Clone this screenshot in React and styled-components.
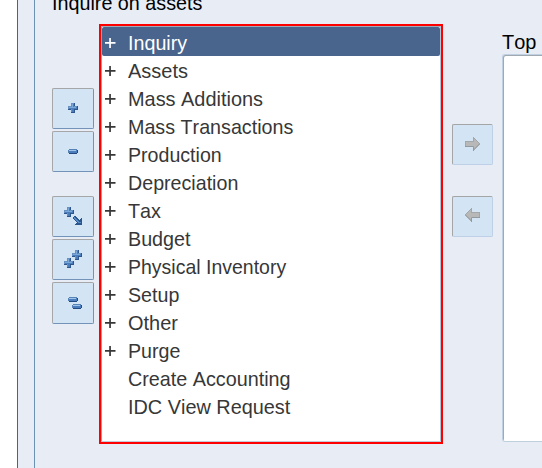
import React from "react";
import styled, { createGlobalStyle } from "styled-components";

const GlobalStyle = createGlobalStyle`
  * { box-sizing: border-box; }
  body { margin: 0; background: #fff; overflow: hidden; }
`;

const Page = styled.div`
  width: 542px;
  height: 468px;
  padding-left: 17px;
  overflow: hidden;
  background: #fff;
  color: #000;
  font: 21px/28px "Liberation Sans", Arial, sans-serif;
  font-kerning: none;
`;

const Window = styled.main`
  height: 468px;
  padding-left: 16px;
  background: #e8edf5;
  border-left: 1px solid #47648e;
`;

const TabPanel = styled.section`
  height: 480px;
  margin-bottom: -12px;
  border-left: 1px solid #6b93b5;
`;

const Description = styled.header`
  display: flex;
  align-items: flex-end;
  height: 24px;
  padding: 0 0 7px 17px;
`;

const Label = styled.span`
  display: block;
  white-space: nowrap;
  transform: scaleX(${({ $stretch }) => $stretch});
  transform-origin: left center;
`;

const Columns = styled.div`
  display: flex;
  align-items: flex-start;
`;

const Toolbar = styled.div`
  width: 42px;
  flex: none;
  margin: 64px 5px 0 17px;
  display: flex;
  flex-direction: column;
  gap: 24px;
`;

const ButtonGroup = styled.div`
  display: flex;
  flex-direction: column;
  gap: 2px;
`;

const ToolButton = styled.button`
  display: block;
  width: ${({ $muted }) => ($muted ? 41 : 42)}px;
  height: ${({ $tall }) => ($tall ? 42 : 41)}px;
  padding: 0;
  border: 1px solid;
  border-color: ${({ $muted }) =>
    $muted ? "#a3a5a7 #bdd0e5 #bdd0e5 #a3a5a7" : "#a5a6a8 #7394b8 #7394b8 #a5a6a8"};
  border-radius: 2px;
  background: #d3e4f4;
  svg { display: block; }
`;

const Tree = styled.ul`
  width: 344px;
  height: 420px;
  flex: none;
  margin: 0;
  padding: 0;
  list-style: none;
  border: 2px solid #fe0000;
  background: #fff;
`;

const TreeBody = styled.div`
  height: 416px;
  border: 1px solid;
  border-color: #9eabba #b3c4d5 #c2ccd8 #a5a7aa;
  border-radius: 1px;
`;

const TreeRow = styled.li`
  display: flex;
  align-items: center;
  height: ${({ $selected }) => ($selected ? 29 : 28)}px;
  padding: ${({ $selected }) => ($selected ? "3px 0 0" : "2px 0 0")} 3px;
  border-radius: ${({ $selected }) => ($selected ? 2 : 0)}px;
  color: ${({ $selected }) => ($selected ? "#fff" : "#373737")};
  background: ${({ $selected }) => ($selected ? "#49648d" : "transparent")};
`;

const Expander = styled.span`
  width: 23px;
  height: 28px;
  flex: none;
  svg { display: block; }
`;

const MoveButtons = styled.div`
  width: 41px;
  flex: none;
  margin: 100px 9px 0;
  display: flex;
  flex-direction: column;
  gap: 31px;
`;

const TopTen = styled.section`
  width: 60px;
  flex: none;
  margin-top: 4px;
`;

const TopTitle = styled.div`
  height: 26px;
`;

const TopList = styled.div`
  height: 388px;
  border-top: 1px solid #bfd0e3;
  border-left: 1px solid #bfd0e3;
  border-bottom: 1px solid #bfd0dd;
  border-radius: 3px 0 0 3px;
  background: #fff;
  box-shadow: inset 1px 1px #a0a8b0;
`;

function Plus({ x, y }) {
  return (
    <g transform={`translate(${x} ${y})`} shapeRendering="crispEdges">
      <path d="M3 0h4v3h3v4h-3v3H3V7H0V3h3z" fill="#2c568c" />
      <path d="M3 0h3v3h3v3h-3v3H3V6H0V3h3z" fill="#6890c0" />
      <path d="M4 1h2v3h3v2H6v3H4V6H1V4h3z" fill="#4b7dbc" />
      <path d="M4 1h1v3h3v1H1V4h3z" fill="#79a9d8" />
    </g>
  );
}

function Minus({ x, y }) {
  return (
    <g transform={`translate(${x} ${y})`} shapeRendering="crispEdges">
      <path d="M1 0h8v1h1v3H9v1H1V4H0V1h1z" fill="#234b80" />
      <path d="M1 0h8v1H1v3H0V1h1z" fill="#5782b5" />
      <path d="M1 1h8v3H1z" fill="#4c7dbd" />
      <path d="M1 1h7v1H1z" fill="#a0c5e9" />
    </g>
  );
}

function DiagonalArrow({ x, y }) {
  return (
    <g transform={`translate(${x} ${y})`} shapeRendering="crispEdges">
      <path d="M1 0h2v1h1v1h1v1h1v1h1V3h1V2h1v7H2V8h1V7h1V6H3V5H2V4H1V3H0V1h1z" fill="#2b568d" />
      <path d="M1 1h1v1h1v1h1v1h1v1h1v1h2v1H5V6H4V5H3V4H2V3H1z" fill="#568bc5" />
    </g>
  );
}

function MoveArrow({ left }) {
  return (
    <g transform={left ? "translate(27 11) scale(-1 1)" : "translate(12 12)"} shapeRendering="crispEdges">
      <path d="M0 4h8V0h1v1h1v1h1v1h1v1h1v1h1v1h1v2h-1v1h-1v1h-1v1h-1v1h-1v1H9v1H8v-4H0z" fill="#a3a7aa" />
      <path d="M1 5h8V2h1v1h1v1h1v1h1v1h1v1h-1v1h-1v1h-1v1h-1v1H9V9H1z" fill="#b8b8b8" />
      <path d="M0 9h8v1H0zM8 10h1v4H8z" fill="#929aa1" />
    </g>
  );
}

function Icon({ children }) {
  return <svg width="39" height="39" viewBox="0 0 39 39" aria-hidden="true">{children}</svg>;
}

const menuItems = [
  { name: "Inquiry", stretch: 0.938, selected: true },
  { name: "Assets", stretch: 0.952 },
  { name: "Mass Additions", stretch: 0.948 },
  { name: "Mass Transactions", stretch: 0.938 },
  { name: "Production", stretch: 0.933 },
  { name: "Depreciation", stretch: 0.936 },
  { name: "Tax", stretch: 0.94 },
  { name: "Budget", stretch: 0.938 },
  { name: "Physical Inventory", stretch: 0.928 },
  { name: "Setup", stretch: 0.935 },
  { name: "Other", stretch: 0.95 },
  { name: "Purge", stretch: 0.935 },
  { name: "Create Accounting", stretch: 0.941, leaf: true },
  { name: "IDC View Request", stretch: 0.946, leaf: true },
];

function NavigatorTree() {
  return (
    <Tree>
      <TreeBody>
        {menuItems.map(({ name, stretch, selected, leaf }) => (
          <TreeRow key={name} $selected={selected}>
            <Expander>
              {!leaf && (
                <svg width="12" height="28" aria-label="Expand">
                  <path d="M0 13.1h10.5v1.7H0zM4.2 9h1.7v10H4.2z" fill="currentColor" />
                </svg>
              )}
            </Expander>
            <Label $stretch={stretch}>{name}</Label>
          </TreeRow>
        ))}
      </TreeBody>
    </Tree>
  );
}

export default function App() {
  return (
    <>
      <GlobalStyle />
      <Page>
        <Window>
          <TabPanel>
            <Description>
              <Label $stretch={0.94}>Inquire on assets</Label>
            </Description>
            <Columns>
              <Toolbar>
                <ButtonGroup>
                  <ToolButton aria-label="Expand"><Icon><Plus x={15} y={14} /></Icon></ToolButton>
                  <ToolButton aria-label="Collapse"><Icon><Minus x={15} y={17} /></Icon></ToolButton>
                </ButtonGroup>
                <ButtonGroup>
                  <ToolButton aria-label="Expand branch"><Icon><Plus x={11} y={10} /><DiagonalArrow x={20} y={19} /></Icon></ToolButton>
                  <ToolButton aria-label="Expand all"><Icon><Plus x={19} y={10} /><Plus x={11} y={18} /></Icon></ToolButton>
                  <ToolButton $tall aria-label="Collapse all"><Icon><Minus x={15} y={13} /><Minus x={19} y={20} /></Icon></ToolButton>
                </ButtonGroup>
              </Toolbar>
              <NavigatorTree />
              <MoveButtons>
                <ToolButton $muted aria-label="Add to list"><Icon><MoveArrow /></Icon></ToolButton>
                <ToolButton $muted aria-label="Remove from list"><Icon><MoveArrow left /></Icon></ToolButton>
              </MoveButtons>
              <TopTen>
                <TopTitle><Label $stretch={0.95}>Top</Label></TopTitle>
                <TopList />
              </TopTen>
            </Columns>
          </TabPanel>
        </Window>
      </Page>
    </>
  );
}
